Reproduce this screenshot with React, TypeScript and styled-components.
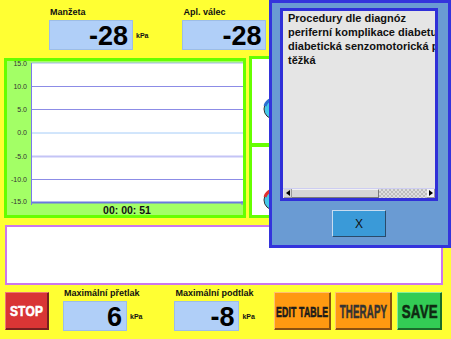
import React from "react";
import styled, { createGlobalStyle } from "styled-components";

const GlobalStyle = createGlobalStyle`
  html, body {
    margin: 0;
    padding: 0;
    background: #ffff33;
  }
  body {
    font-family: "Liberation Sans", Arial, sans-serif;
  }
  * {
    box-sizing: border-box;
  }
`;

const Screen = styled.div`
  position: relative;
  width: 451px;
  height: 339px;
  overflow: hidden;
  background: #ffff33;
  display: flex;
  flex-direction: column;
`;

const TopBar = styled.div`
  display: flex;
  align-items: flex-start;
  height: 56px;
  padding: 7px 0 0 49px;
  gap: 34px;
`;

const Gauge = styled.div<{ $offset?: number }>`
  display: flex;
  flex-direction: column;
  margin-left: ${({ $offset }) => $offset ?? 0}px;
`;

const GaugeLabel = styled.div`
  height: 11px;
  margin-bottom: 2px;
  padding-left: 1px;
  font-size: 9px;
  font-weight: bold;
  line-height: 11px;
  color: #111;
  white-space: nowrap;
`;

const GaugeRow = styled.div`
  display: flex;
  align-items: center;
`;

const ValueBox = styled.div<{ $width: number }>`
  width: ${({ $width }) => $width}px;
  height: 30px;
  padding: 2px 4px 0 0;
  display: flex;
  align-items: center;
  justify-content: flex-end;
  background: #b0cff8;
  border: 1px solid #9dbde6;
  font-size: 27px;
  font-weight: bold;
  line-height: 1;
  color: #000;
`;

const Unit = styled.span`
  margin-left: 3px;
  font-size: 7px;
  font-weight: bold;
  color: #111;
`;

const Workspace = styled.div`
  display: flex;
  align-items: flex-start;
  height: 163px;
  padding-left: 4px;
`;

const ChartPanel = styled.div`
  width: 242px;
  height: 160px;
  margin-top: 2px;
  border: 3px solid #66ff00;
  background: #a3ff66;
  display: flex;
  flex-direction: column;
`;

const PlotSvg = styled.svg`
  display: block;
`;

const TimeRow = styled.div`
  height: 10px;
  padding-left: 4px;
  display: flex;
  align-items: center;
  justify-content: center;
  font-size: 10.5px;
  font-weight: bold;
  color: #111;
`;

const SidePanel = styled.div`
  width: 193px;
  height: 162px;
  margin-left: 3px;
  border: 3px solid #66ff00;
  display: flex;
  flex-direction: column;
`;

const SideCell = styled.div<{ $top: number }>`
  flex: 1;
  background: #fff;
  padding: ${({ $top }) => $top}px 0 0 10px;
`;

const SideDivider = styled.div`
  height: 4px;
  background: #66ff00;
`;

const MessageBox = styled.div`
  width: 438px;
  height: 60px;
  margin: 6px 0 0 5px;
  border: 2px solid #cc77ee;
  background: #fff;
`;

const BottomBar = styled.div`
  display: flex;
  align-items: flex-start;
  margin-top: 3px;
  padding-left: 5px;
`;

const ActionButton = styled.button<{
  $bg: string;
  $light: string;
  $dark: string;
  $width: number;
  $offset: number;
}>`
  width: ${({ $width }) => $width}px;
  height: 38px;
  margin: 4px 0 0 ${({ $offset }) => $offset}px;
  padding: 0;
  display: flex;
  align-items: center;
  justify-content: center;
  background: ${({ $bg }) => $bg};
  border: 1px solid;
  border-color: ${({ $light, $dark }) => `${$light} ${$dark} ${$dark} ${$light}`};
  box-shadow: inset -1px -1px 0 ${({ $dark }) => $dark};
  cursor: pointer;
  overflow: hidden;
`;

const ButtonText = styled.span<{ $size: number; $squeeze: number; $color: string }>`
  display: inline-block;
  font-family: "Liberation Sans", Arial, sans-serif;
  font-size: ${({ $size }) => $size}px;
  font-weight: bold;
  line-height: 1;
  color: ${({ $color }) => $color};
  white-space: nowrap;
  letter-spacing: 0.3px;
  -webkit-text-stroke: 0.6px currentColor;
  transform: scaleX(${({ $squeeze }) => $squeeze});
`;

const Dialog = styled.div`
  position: absolute;
  left: 269px;
  top: 0;
  width: 182px;
  height: 248px;
  padding: 5px 10px 0 8px;
  display: flex;
  flex-direction: column;
  background: #6a9bd3;
  border: 3px solid #3434dc;
`;

const TextPane = styled.div`
  height: 193px;
  display: flex;
  flex-direction: column;
  background: #e5e5e5;
  border: 3px solid #3030d8;
`;

const PaneText = styled.div`
  flex: 1;
  padding-left: 5px;
  overflow: hidden;
  font-size: 11px;
  font-weight: bold;
  line-height: 14px;
  color: #111;
  white-space: nowrap;
`;

const ScrollBar = styled.div`
  height: 10px;
  padding-left: 1px;
  display: flex;
  border-top: 1px solid #cdcdf2;
`;

const ScrollArrow = styled.div<{ $bg: string }>`
  width: 8px;
  display: flex;
  align-items: center;
  justify-content: center;
  background: ${({ $bg }) => $bg};
  border-right: 1px solid #9a9a9a;
  border-bottom: 1px solid #9a9a9a;
`;

const ScrollThumb = styled.div`
  width: 87px;
  background: #d6d6d6;
  border-top: 1px solid #f2f2f2;
  border-right: 1px solid #7a7a7a;
  border-bottom: 1px solid #7a7a7a;
`;

const ScrollTrack = styled.div`
  flex: 1;
  background: repeating-conic-gradient(#bdbdbd 0% 25%, #dedede 0% 50%) 0 0 / 4px 4px;
`;

const CloseButton = styled.button`
  align-self: center;
  width: 54px;
  height: 27px;
  margin-top: 9px;
  padding: 0;
  background: #3a9ad8;
  border: 1px solid;
  border-color: #c8dcf0 #2a4a6a #2a4a6a #c8dcf0;
  font-family: "Liberation Sans", Arial, sans-serif;
  font-size: 12px;
  color: #111;
  cursor: pointer;
`;

const gridLines = [
  { y: 2, color: "#a8b8f0", w: 1 },
  { y: 25.5, color: "#8c8ce6", w: 1 },
  { y: 48.5, color: "#8c8ce6", w: 1 },
  { y: 72, color: "#a4ccf8", w: 1 },
  { y: 95.5, color: "#c4c4f6", w: 2 },
  { y: 118.5, color: "#8c8ce6", w: 1 },
];

const axisLabels = [
  { y: 3, text: "15.0" },
  { y: 26, text: "10.0" },
  { y: 49, text: "5.0" },
  { y: 72, text: "0.0" },
  { y: 96, text: "-5.0" },
  { y: 119, text: "-10.0" },
  { y: 141, text: "-15.0" },
];

const PressurePlot = () => (
  <PlotSvg width={236} height={144} viewBox="0 0 236 144">
    <rect x={24.5} y={2} width={211.5} height={140} fill="#fff" />
    {gridLines.map((g) => (
      <line
        key={g.y}
        x1={24.5}
        x2={236}
        y1={g.y}
        y2={g.y}
        stroke={g.color}
        strokeWidth={g.w}
      />
    ))}
    <line x1={24.5} x2={236} y1={141.5} y2={141.5} stroke="#6a78e0" strokeWidth={2} />
    <line x1={24.5} x2={24.5} y1={2} y2={144} stroke="#7a7ae8" strokeWidth={1} />
    <line x1={235} x2={235} y1={140} y2={144} stroke="#7a7ae8" strokeWidth={1} />
    {axisLabels.map((l) => (
      <text
        key={l.text}
        x={20}
        y={l.y}
        textAnchor="end"
        dominantBaseline="middle"
        fontSize={7}
        fontFamily="Liberation Sans, Arial, sans-serif"
        fill="#333"
      >
        {l.text}
      </text>
    ))}
  </PlotSvg>
);

const CuffIcon = ({ fill, accent, stem }: { fill: string; accent: string; stem: number }) => (
  <svg width={24} height={stem + 22} viewBox={`0 0 24 ${stem + 22}`}>
    <path
      d={`M12 1 C10 ${stem * 0.3} 14 ${stem * 0.6} 11 ${stem}`}
      stroke="#777"
      strokeWidth={2}
      fill="none"
    />
    <circle cx={12} cy={stem + 11} r={10} fill={fill} stroke="#333" strokeWidth={1} />
    <path d={`M3 ${stem + 8} A10 10 0 0 1 9 ${stem + 1.5}`} stroke={accent} strokeWidth={3} fill="none" />
  </svg>
);

const App = () => {
  return (
    <>
      <GlobalStyle />
      <Screen>
        <TopBar>
          <Gauge>
            <GaugeLabel>Manžeta</GaugeLabel>
            <GaugeRow>
              <ValueBox $width={84}>-28</ValueBox>
              <Unit>kPa</Unit>
            </GaugeRow>
          </Gauge>
          <Gauge>
            <GaugeLabel>Apl. válec</GaugeLabel>
            <GaugeRow>
              <ValueBox $width={84}>-28</ValueBox>
              <Unit>kPa</Unit>
            </GaugeRow>
          </Gauge>
        </TopBar>

        <Workspace>
          <ChartPanel>
            <PressurePlot />
            <TimeRow>00: 00: 51</TimeRow>
          </ChartPanel>
          <SidePanel>
            <SideCell $top={24}>
              <CuffIcon fill="#44c8e8" accent="#2b6fd0" stem={15} />
            </SideCell>
            <SideDivider />
            <SideCell $top={4}>
              <CuffIcon fill="#44c8e8" accent="#e03030" stem={38} />
            </SideCell>
          </SidePanel>
        </Workspace>

        <MessageBox />

        <BottomBar>
          <ActionButton $bg="#d93535" $light="#ee7777" $dark="#772020" $width={44} $offset={0}>
            <ButtonText $size={14} $squeeze={0.85} $color="#fff">
              STOP
            </ButtonText>
          </ActionButton>
          <Gauge $offset={14}>
            <GaugeLabel>Maximální přetlak</GaugeLabel>
            <GaugeRow>
              <ValueBox $width={64}>6</ValueBox>
              <Unit>kPa</Unit>
            </GaugeRow>
          </Gauge>
          <Gauge $offset={32}>
            <GaugeLabel>Maximální podtlak</GaugeLabel>
            <GaugeRow>
              <ValueBox $width={65}>-8</ValueBox>
              <Unit>kPa</Unit>
            </GaugeRow>
          </Gauge>
          <ActionButton $bg="#ff9911" $light="#ffc070" $dark="#8a5010" $width={57} $offset={19}>
            <ButtonText $size={15} $squeeze={0.58} $color="#1a1a1a">
              EDIT TABLE
            </ButtonText>
          </ActionButton>
          <ActionButton $bg="#ff9911" $light="#ffc070" $dark="#8a5010" $width={57} $offset={4}>
            <ButtonText $size={19} $squeeze={0.51} $color="#333">
              THERAPY
            </ButtonText>
          </ActionButton>
          <ActionButton $bg="#33cc55" $light="#88ee99" $dark="#1a6a2a" $width={45} $offset={5}>
            <ButtonText $size={19} $squeeze={0.7} $color="#0f2a12">
              SAVE
            </ButtonText>
          </ActionButton>
        </BottomBar>

        <Dialog>
          <TextPane>
            <PaneText>
              <div>Procedury dle diagnóz</div>
              <div>periferní komplikace diabetu</div>
              <div>diabetická senzomotorická polyneuropatie</div>
              <div>těžká</div>
            </PaneText>
            <ScrollBar>
              <ScrollArrow $bg="#d6d6d6">
                <svg width={4} height={6} viewBox="0 0 4 6">
                  <path d="M4 0 L0 3 L4 6 Z" fill="#000" />
                </svg>
              </ScrollArrow>
              <ScrollThumb />
              <ScrollTrack />
              <ScrollArrow $bg="#f4f4f4">
                <svg width={4} height={6} viewBox="0 0 4 6">
                  <path d="M0 0 L4 3 L0 6 Z" fill="#000" />
                </svg>
              </ScrollArrow>
            </ScrollBar>
          </TextPane>
          <CloseButton>X</CloseButton>
        </Dialog>
      </Screen>
    </>
  );
};

export default App;
